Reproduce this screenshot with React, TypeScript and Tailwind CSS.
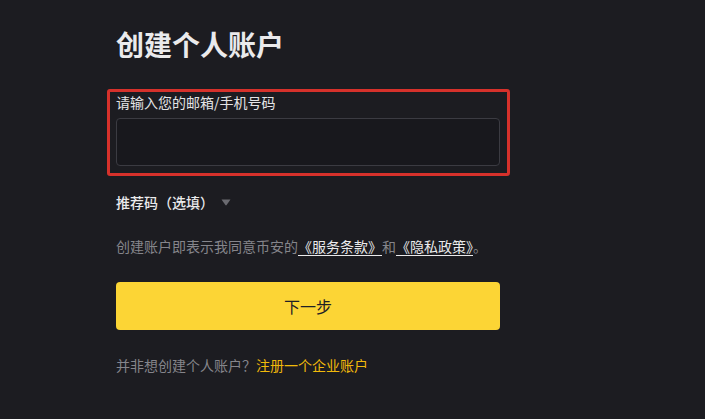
const font = {
  fontFamily: '"Noto Sans CJK SC", "Noto Sans", sans-serif',
};

function Caret() {
  return (
    <svg width="10" height="7" viewBox="0 0 10 7" className="ml-[7px]">
      <path d="M0.5 0.5 H9.5 L5.6 6 Q5 6.8 4.4 6 Z" fill="#6a6a70" />
    </svg>
  );
}

export default function App() {
  return (
    <div
      style={font}
      className="min-h-[419px] w-full bg-[#1c1c21] pt-[26px] pl-[116px]"
    >
      <div className="flex w-[384px] flex-col">
        <h1 className="h-9 text-[28px] font-bold leading-9 text-[#eaeaec]">
          创建个人账户
        </h1>

        <div className="-ml-[9px] mt-[27px] w-[403px] rounded-[3px] border-[3px] border-[#d6312b] pb-[7px] pl-[6px] pr-[7px]">
          <label className="block h-5 text-[14px] leading-5 text-[#e4e4e6]">
            请输入您的邮箱/手机号码
          </label>
          <input
            type="text"
            className="mt-[6px] block h-[48px] w-[384px] rounded-[4px] border border-[#3b3b42] bg-[#18181d] px-3 text-[14px] text-white outline-none"
          />
        </div>

        <div className="mt-[16px] flex h-5 items-center">
          <span className="text-[14px] font-medium leading-5 text-[#eaeaec]">
            推荐码（选填）
          </span>
          <Caret />
        </div>

        <p className="mt-[24px] h-5 whitespace-nowrap text-[14px] leading-5 text-[#85858b]">
          创建账户即表示我同意币安的
          <a className="text-[#eaeaec] underline underline-offset-[3px]">
            《服务条款》
          </a>
          和
          <a className="text-[#eaeaec] underline underline-offset-[3px]">
            《隐私政策》
          </a>
          。
        </p>

        <button className="mt-[26px] flex h-[48px] w-[384px] items-center justify-center rounded-[4px] bg-[#fcd535] text-[16px] text-[#1e2026]">
          下一步
        </button>

        <p className="mt-[25px] h-5 text-[14px] leading-5 text-[#85858b]">
          并非想创建个人账户？
          <a className="text-[#f0b90b]">注册一个企业账户</a>
        </p>
      </div>
    </div>
  );
}
